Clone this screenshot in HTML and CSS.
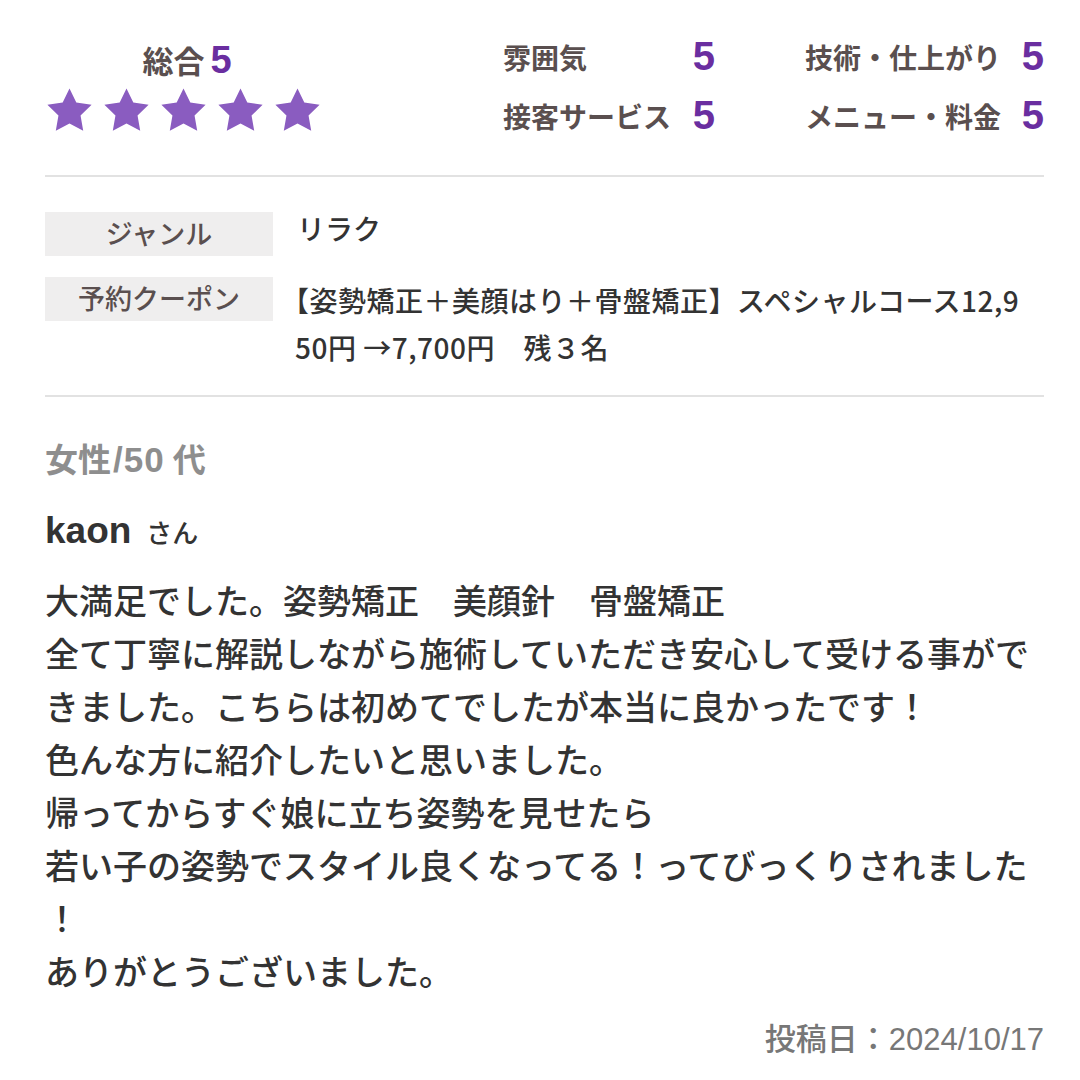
FILE: index.html
```html
<!DOCTYPE html>
<html lang="ja">
<head>
<meta charset="utf-8">
<link rel="stylesheet" href="styles.css">
</head>
<body>
<div class="page">
  <section class="ratings">
    <div class="overall">
      <div class="overall-title">総合<span class="overall-num">5</span></div>
      <div class="stars">
        <svg class="star" viewBox="0 0 24 24"><path d="M12 1.2l3.2 6.6 7.2 1-5.2 5.1 1.25 7.2L12 17.7l-6.45 3.4 1.25-7.2L1.6 8.8l7.2-1z"/></svg>
        <svg class="star" viewBox="0 0 24 24"><path d="M12 1.2l3.2 6.6 7.2 1-5.2 5.1 1.25 7.2L12 17.7l-6.45 3.4 1.25-7.2L1.6 8.8l7.2-1z"/></svg>
        <svg class="star" viewBox="0 0 24 24"><path d="M12 1.2l3.2 6.6 7.2 1-5.2 5.1 1.25 7.2L12 17.7l-6.45 3.4 1.25-7.2L1.6 8.8l7.2-1z"/></svg>
        <svg class="star" viewBox="0 0 24 24"><path d="M12 1.2l3.2 6.6 7.2 1-5.2 5.1 1.25 7.2L12 17.7l-6.45 3.4 1.25-7.2L1.6 8.8l7.2-1z"/></svg>
        <svg class="star" viewBox="0 0 24 24"><path d="M12 1.2l3.2 6.6 7.2 1-5.2 5.1 1.25 7.2L12 17.7l-6.45 3.4 1.25-7.2L1.6 8.8l7.2-1z"/></svg>
      </div>
    </div>
    <div class="sub-grid">
      <div class="sub sub-a"><span class="sub-label">雰囲気</span><span class="sub-num">5</span></div>
      <div class="sub sub-b"><span class="sub-label">技術・仕上がり</span><span class="sub-num">5</span></div>
      <div class="sub sub-a"><span class="sub-label">接客サービス</span><span class="sub-num">5</span></div>
      <div class="sub sub-b"><span class="sub-label">メニュー・料金</span><span class="sub-num">5</span></div>
    </div>
  </section>

  <section class="info">
    <div class="info-row">
      <div class="info-label">ジャンル</div>
      <div class="info-value">リラク</div>
    </div>
    <div class="info-row">
      <div class="info-label">予約クーポン</div>
      <div class="info-value coupon">【姿勢矯正＋美顔はり＋骨盤矯正】スペシャルコース12,950円 →7,700円　残３名</div>
    </div>
  </section>

  <section class="review">
    <div class="profile">女性<span class="slash">/50</span><span class="gen">代</span></div>
    <div class="name"><span class="name-main">kaon</span><span class="san">さん</span></div>
    <p class="body">大満足でした。姿勢矯正　美顔針　骨盤矯正<br>全て丁寧に解説しながら施術していただき安心して受ける事ができました。こちらは初めてでしたが本当に良かったです！<br>色んな方に紹介したいと思いました。<br>帰ってからすぐ娘に立ち姿勢を見せたら<br>若い子の姿勢でスタイル良くなってる！ってびっくりされました！<br>ありがとうございました。</p>
    <div class="date">投稿日：2024/10/17</div>
  </section>
</div>
</body>
</html>
```

FILE: styles.css
```css
* { box-sizing: border-box; }
html, body { margin: 0; padding: 0; background: #ffffff; }
body {
  font-family: "Liberation Sans", "Noto Sans CJK JP", sans-serif;
  color: #333333;
}
.page {
  width: 1080px;
  padding: 0 36px 0 45px;
}

/* ratings */
.ratings {
  display: flex;
  align-items: flex-start;
  padding-top: 35px;
  height: 177px;
  border-bottom: 2px solid #e2e2e2;
}
.overall {
  width: 278px;
  display: flex;
  flex-direction: column;
  align-items: center;
}
.overall-title {
  font-size: 31px;
  font-weight: bold;
  color: #5a4f4f;
  line-height: 50px;
  height: 50px;
  padding-left: 6px;
}
.overall-num {
  color: #6a2ea0;
  font-size: 38px;
  margin-left: 6px;
}
.stars {
  display: flex;
  gap: 6px;
  margin-top: 1px;
  margin-left: -2px;
}
.star {
  width: 51px;
  height: 51px;
  fill: #8a5cc0;
}
.sub-grid {
  margin-left: 180px;
  display: grid;
  grid-template-columns: 212px 239px;
  column-gap: 90px;
  grid-auto-rows: 59px;
  margin-top: -8px;
}
.sub {
  display: flex;
  justify-content: space-between;
  align-items: center;
}
.sub-label {
  font-size: 28px;
  font-weight: bold;
  color: #5a4f4f;
}
.sub-num {
  font-size: 40px;
  font-weight: bold;
  color: #6a2ea0;
}

/* info */
.info {
  padding: 35px 0 24px;
  border-bottom: 2px solid #e2e2e2;
  display: flex;
  flex-direction: column;
  gap: 21px;
}
.info-row {
  display: flex;
  align-items: flex-start;
  gap: 24px;
}
.info-label {
  flex: 0 0 228px;
  height: 44px;
  background: #efeeee;
  color: #5a4f4f;
  font-size: 27px;
  font-weight: 500;
  line-height: 46px;
  text-align: center;
}
.info-value {
  font-size: 28px;
  font-weight: 500;
  line-height: 38px;
  color: #333333;
}
.coupon {
  width: 733px;
  line-height: 47px;
  font-family: "Noto Sans CJK JP", sans-serif;
  letter-spacing: 0.5px;
  text-spacing-trim: trim-start;
  word-break: break-all;
  line-break: anywhere;
  margin-left: -2px;
}

/* review */
.review {
  padding-top: 43px;
}
.profile {
  font-size: 33px;
  font-weight: bold;
  color: #8e8e8e;
  line-height: 40px;
}
.slash {
  font-size: 35px;
  letter-spacing: 1px;
  margin-left: 2px;
}
.gen { margin-left: 8px; }
.name {
  margin-top: 30px;
  line-height: 40px;
  color: #333333;
}
.name-main {
  font-size: 37px;
  font-weight: bold;
}
.san {
  font-size: 26px;
  font-weight: 500;
  margin-left: 15px;
}
.body {
  margin: 18px 0 0;
  font-size: 34px;
  font-weight: 500;
  line-height: 53px;
  color: #333333;
  line-break: anywhere;
}
.date {
  margin-top: 20px;
  text-align: right;
  font-size: 31px;
  font-weight: 500;
  line-height: 40px;
  color: #777777;
}
```
